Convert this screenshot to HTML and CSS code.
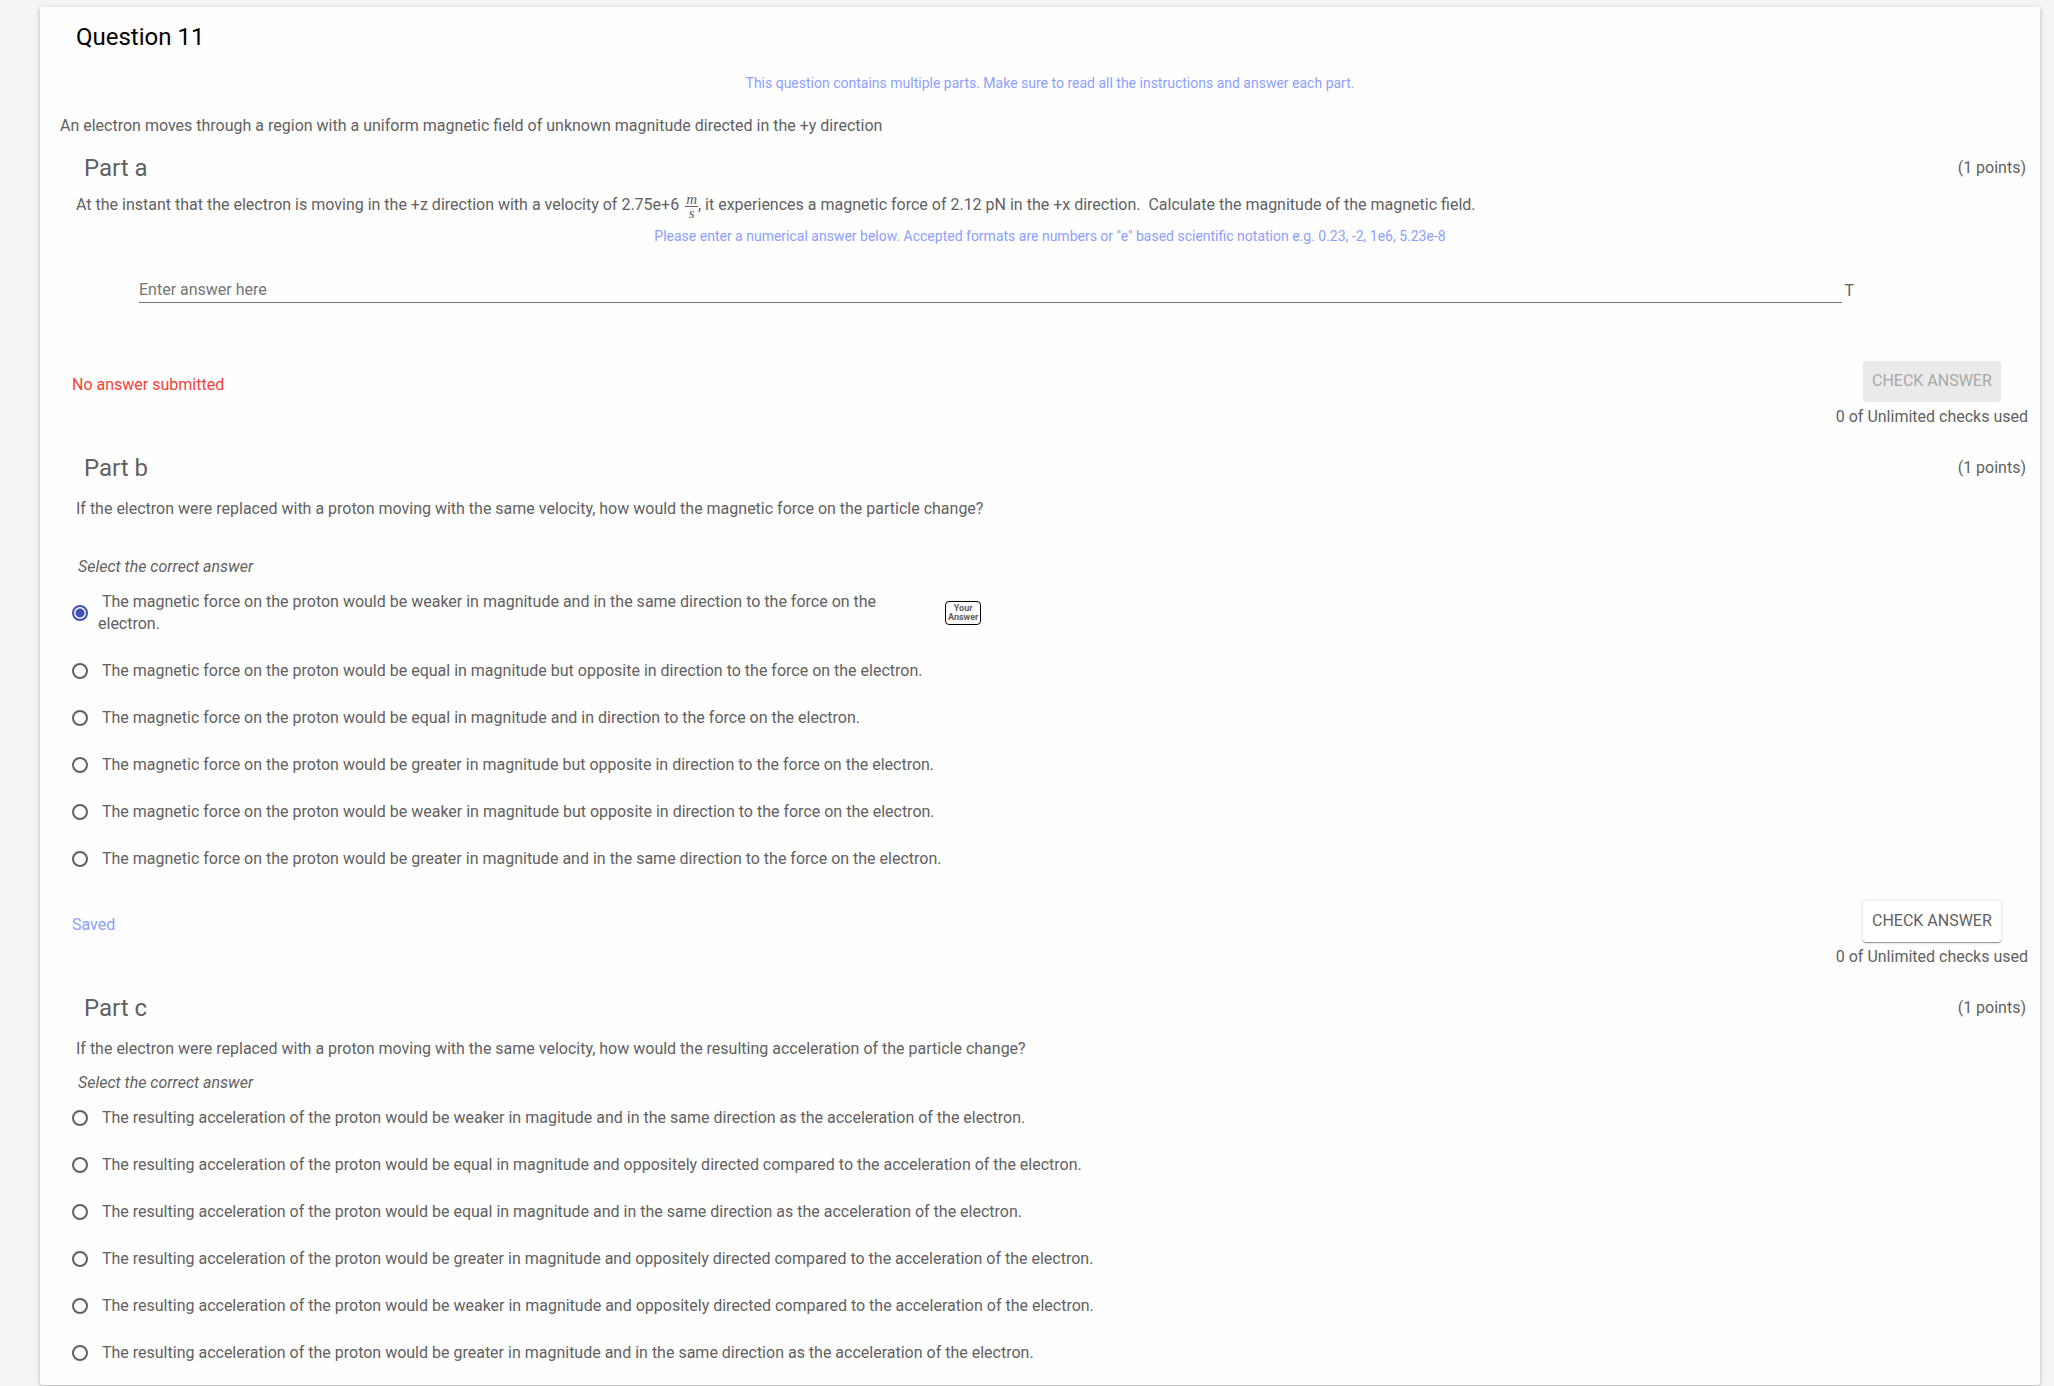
FILE: index.html
```html
<!DOCTYPE html>
<html lang="en">
<head>
    <meta charset="UTF-8">
    <meta name="viewport" content="width=device-width, initial-scale=1.0">
    <title>Question 11</title>
    <link rel="stylesheet" href="styles.css">
</head>
<body>
    <main class="question-card">
        <h1 class="question-title">Question 11</h1>
        <p class="hint">This question contains multiple parts. Make sure to read all the instructions and answer each part.</p>
        <p class="intro">An electron moves through a region with a uniform magnetic field of unknown magnitude directed in the +y direction</p>

        <section class="part part-numeric">
            <div class="part-header">
                <h2>Part a</h2>
                <span class="points">(1 points)</span>
            </div>
            <p class="part-text">At the instant that the electron is moving in the +z direction with a velocity of 2.75e+6 <span class="fraction"><span class="numerator">m</span><span>s</span></span>, it experiences a magnetic force of 2.12 pN in the +x direction.&nbsp; Calculate the magnitude of the magnetic field.</p>
            <p class="hint">Please enter a numerical answer below. Accepted formats are numbers or "e" based scientific notation e.g. 0.23, -2, 1e6, 5.23e-8</p>
            <div class="answer-row">
                <input type="text" id="answer-a" class="answer-input" placeholder="Enter answer here" aria-label="Answer for part a">
                <label for="answer-a" class="unit">T</label>
            </div>
            <div class="submit-row">
                <span class="status status-error">No answer submitted</span>
                <div class="check">
                    <button type="button" class="check-button" disabled>CHECK ANSWER</button>
                    <span>0 of Unlimited checks used</span>
                </div>
            </div>
        </section>

        <section class="part part-spaced">
            <div class="part-header">
                <h2>Part b</h2>
                <span class="points">(1 points)</span>
            </div>
            <p class="part-text">If the electron were replaced with a proton moving with the same velocity, how would the magnetic force on the particle change?</p>
            <p class="select-text">Select the correct answer</p>
            <div class="options">
                <div class="option option-answered">
                    <input type="radio" name="part-b" id="b1" checked>
                    <label for="b1">&nbsp;The magnetic force on the proton would be weaker in magnitude and in the same direction to the force on the electron.</label>
                    <span class="your-answer">Your<br>Answer</span>
                </div>
                <div class="option">
                    <input type="radio" name="part-b" id="b2">
                    <label for="b2">&nbsp;The magnetic force on the proton would be equal in magnitude but opposite in direction to the force on the electron.</label>
                </div>
                <div class="option">
                    <input type="radio" name="part-b" id="b3">
                    <label for="b3">&nbsp;The magnetic force on the proton would be equal in magnitude and in direction to the force on the electron.</label>
                </div>
                <div class="option">
                    <input type="radio" name="part-b" id="b4">
                    <label for="b4">&nbsp;The magnetic force on the proton would be greater in magnitude but opposite in direction to the force on the electron.</label>
                </div>
                <div class="option">
                    <input type="radio" name="part-b" id="b5">
                    <label for="b5">&nbsp;The magnetic force on the proton would be weaker in magnitude but opposite in direction to the force on the electron.</label>
                </div>
                <div class="option">
                    <input type="radio" name="part-b" id="b6">
                    <label for="b6">&nbsp;The magnetic force on the proton would be greater in magnitude and in the same direction to the force on the electron.</label>
                </div>
            </div>
            <div class="submit-row">
                <span class="status status-saved">Saved</span>
                <div class="check">
                    <button type="button" class="check-button">CHECK ANSWER</button>
                    <span>0 of Unlimited checks used</span>
                </div>
            </div>
        </section>

        <section class="part">
            <div class="part-header">
                <h2>Part c</h2>
                <span class="points">(1 points)</span>
            </div>
            <p class="part-text">If the electron were replaced with a proton moving with the same velocity, how would the resulting acceleration of the particle change?</p>
            <p class="select-text">Select the correct answer</p>
            <div class="options">
                <div class="option">
                    <input type="radio" name="part-c" id="c1">
                    <label for="c1">&nbsp;The resulting acceleration of the proton would be weaker in magitude and in the same direction as the acceleration of the electron.</label>
                </div>
                <div class="option">
                    <input type="radio" name="part-c" id="c2">
                    <label for="c2">&nbsp;The resulting acceleration of the proton would be equal in magnitude and oppositely directed compared to the acceleration of the electron.</label>
                </div>
                <div class="option">
                    <input type="radio" name="part-c" id="c3">
                    <label for="c3">&nbsp;The resulting acceleration of the proton would be equal in magnitude and in the same direction as the acceleration of the electron.</label>
                </div>
                <div class="option">
                    <input type="radio" name="part-c" id="c4">
                    <label for="c4">&nbsp;The resulting acceleration of the proton would be greater in magnitude and oppositely directed compared to the acceleration of the electron.</label>
                </div>
                <div class="option">
                    <input type="radio" name="part-c" id="c5">
                    <label for="c5">&nbsp;The resulting acceleration of the proton would be weaker in magnitude and oppositely directed compared to the acceleration of the electron.</label>
                </div>
                <div class="option">
                    <input type="radio" name="part-c" id="c6">
                    <label for="c6">&nbsp;The resulting acceleration of the proton would be greater in magnitude and in the same direction as the acceleration of the electron.</label>
                </div>
            </div>
        </section>
    </main>
</body>
</html>
```

FILE: styles.css
```css
* {
    box-sizing: border-box;
}
body {
    margin: 0;
    padding: 7px 14px 1px 40px;
    background-color: #f4f4f4;
    color: #616161;
    font-family: Roboto, sans-serif;
    font-size: 16px;
    line-height: 24px;
}
h1, h2, p {
    margin: 0;
    font-weight: 400;
}
.question-card {
    padding: 14px 0 8px 20px;
    background-color: #fefefe;
    border-radius: 2px;
    box-shadow: 0 1px 5px rgba(0, 0, 0, 0.2), 0 2px 2px rgba(0, 0, 0, 0.1);
}
.question-title {
    padding-left: 16px;
    color: #000;
    font-size: 24px;
    line-height: 32px;
}
.hint {
    color: #8c9eff;
    font-size: 14px;
    line-height: 20px;
    text-align: center;
}
.question-title + .hint {
    margin: 20px 0 21px;
}

/* Parts */
.part {
    padding-top: 14px;
}
.part + .part {
    padding-top: 23px;
}
.part-header {
    display: flex;
    justify-content: space-between;
    align-items: center;
    padding: 0 14px 0 24px;
    margin-bottom: 13px;
}
.part-header h2 {
    font-size: 24px;
    line-height: 32px;
}
.part-text {
    padding: 0 16px;
}
.part-numeric .part-header {
    margin-bottom: 9px;
}
.part-numeric .part-text {
    margin-bottom: 8px;
}
.fraction {
    display: inline-flex;
    flex-direction: column;
    align-items: center;
    margin-left: 2px;
    vertical-align: middle;
    font-family: "Liberation Serif", serif;
    font-size: 15px;
    font-style: italic;
    line-height: 10px;
}
.numerator {
    padding: 0 1px 2px;
    margin-bottom: 1px;
    border-bottom: 1px solid #616161;
}

/* Numeric answer */
.answer-row {
    display: flex;
    align-items: flex-end;
    gap: 2px;
    padding: 32px 186px 58px 79px;
}
.answer-input {
    flex: 1;
    min-width: 0;
    height: 25px;
    padding: 0;
    border: none;
    border-bottom: 1px solid #757575;
    outline: none;
    background: none;
    color: #616161;
    font: inherit;
}
.answer-input::placeholder {
    color: #757575;
}

/* Status and check button */
.submit-row {
    display: flex;
    justify-content: space-between;
    padding: 0 12px;
}
.status {
    padding-top: 12px;
}
.status-error {
    color: #f44336;
}
.status-saved {
    color: #8c9eff;
}
.check {
    display: flex;
    flex-direction: column;
    align-items: center;
    gap: 3px;
}
.check-button {
    height: 41px;
    padding: 0 9px;
    border: none;
    border-radius: 3px;
    background-color: #fff;
    box-shadow: 0 0 5px rgba(0, 0, 0, 0.12), 0 1px 1px rgba(0, 0, 0, 0.4);
    color: #616161;
    font: inherit;
    cursor: pointer;
}
.check-button:disabled {
    background-color: #eaeaea;
    box-shadow: none;
    color: #a8a8a8;
    cursor: default;
}

/* Multiple choice */
.select-text {
    padding: 0 18px;
    margin-top: 10px;
    font-style: italic;
}
.part-spaced .select-text {
    margin-top: 34px;
}
.part-spaced .options {
    padding-bottom: 18px;
}
.option {
    display: flex;
    align-items: center;
    gap: 10px;
    min-height: 47px;
    padding: 0 12px;
    line-height: 22px;
}
.option-answered {
    padding-top: 12px;
    padding-bottom: 13px;
}
.option-answered label {
    flex: 0 1 837px;
}
.option input {
    appearance: none;
    flex: none;
    width: 16px;
    height: 16px;
    margin: 0;
    border: 2px solid #616161;
    border-radius: 50%;
}
.option input:checked {
    border-color: #3f51b5;
    background: radial-gradient(circle, #3f51b5 0 4px, transparent 5px);
}
.your-answer {
    padding: 2px;
    border: 1px solid #000;
    border-radius: 4px;
    font-size: 9px;
    font-weight: 700;
    line-height: 9px;
    text-align: center;
}
```
